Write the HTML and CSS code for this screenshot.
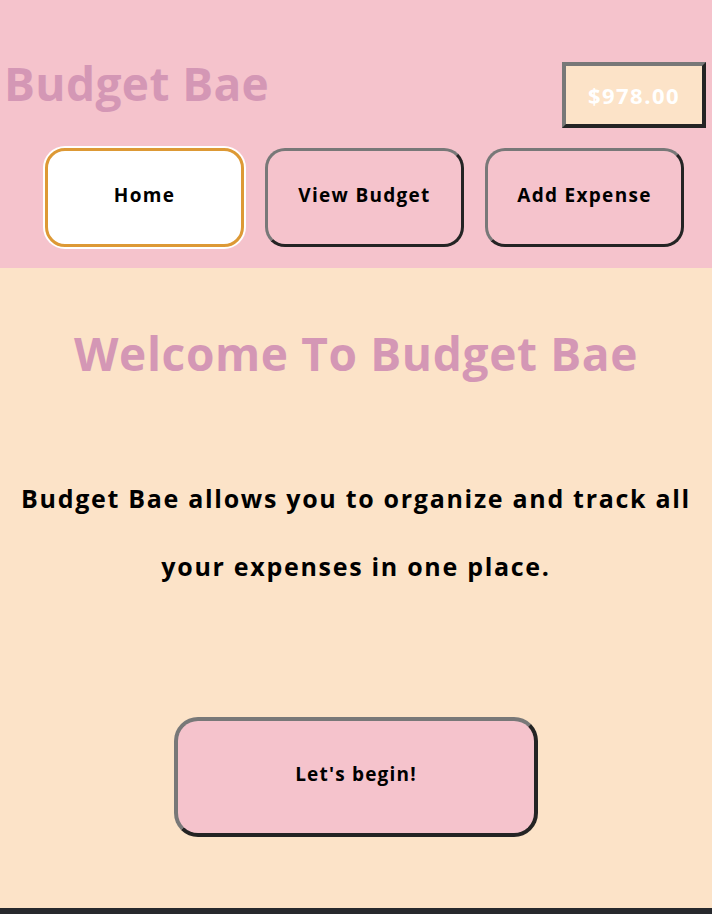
FILE: index.html
```html
<!DOCTYPE html>
<html>
<head>
<meta charset="utf-8">
<link rel="stylesheet" href="styles.css">
</head>
<body>
<header class="header">
  <div class="top">
    <h1 class="brand">Budget Bae</h1>
    <div class="balance">$978.00</div>
  </div>
  <nav class="nav">
    <button class="nav-btn active">Home</button>
    <button class="nav-btn">View Budget</button>
    <button class="nav-btn">Add Expense</button>
  </nav>
</header>
<main class="main">
  <h2 class="welcome">Welcome To Budget Bae</h2>
  <p class="intro">Budget Bae allows you to organize and track all your expenses in one place.</p>
  <button class="begin">Let's begin!</button>
</main>
<div class="footer-bar"></div>
</body>
</html>
```
FILE: styles.css
```css
* { box-sizing: border-box; }
html, body { margin: 0; padding: 0; }
body {
  font-family: "Open Sans", "DejaVu Sans", sans-serif;
  background: #fce3c8;
  height: 914px;
  display: flex;
  flex-direction: column;
}
.header {
  background: #f5c3cc;
  height: 268px;
  display: flex;
  flex-direction: column;
}
.top {
  display: flex;
  justify-content: space-between;
  align-items: flex-start;
  padding: 62px 6px 0 4px;
  height: 148px;
}
.brand {
  margin: 0;
  margin-top: -5px;
  font-size: 46px;
  font-weight: 700;
  letter-spacing: 0.4px;
  color: #d497b5;
  line-height: 52px;
}
.balance {
  width: 144px;
  height: 66px;
  background: #fce3c8;
  border: 4px solid;
  border-color: #787878 #242424 #242424 #787878;
  color: #fff;
  font-weight: 700;
  font-size: 22px;
  letter-spacing: 1.5px;
  display: flex;
  align-items: center;
  justify-content: center;
}
.nav {
  display: flex;
  gap: 21px;
  padding-left: 45px;
}
.nav-btn {
  width: 199px;
  height: 99px;
  border-radius: 20px;
  background: #f5c3cc;
  border: 3px solid;
  border-color: #787878 #242424 #242424 #787878;
  font-family: inherit;
  font-size: 19px;
  font-weight: 700;
  letter-spacing: 1.3px;
  color: #000;
  padding: 0 0 6px;
}
.nav-btn.active {
  background: #fff;
  border-color: #dd9935;
  box-shadow: 0 0 0 2px #fff;
}
.main {
  flex: 1;
  display: flex;
  flex-direction: column;
  align-items: center;
}
.welcome {
  margin: 50px 0 0;
  font-size: 46px;
  font-weight: 700;
  letter-spacing: 0.65px;
  color: #d497b5;
  line-height: 70px;
}
.intro {
  margin: 76px 0 0;
  padding: 0 14px;
  text-align: center;
  font-size: 25px;
  font-weight: 700;
  letter-spacing: 1.7px;
  line-height: 68px;
  color: #000;
}
.begin {
  margin-top: 117px;
  width: 364px;
  height: 120px;
  border-radius: 24px;
  background: #f5c3cc;
  border: 4px solid;
  border-color: #787878 #242424 #242424 #787878;
  font-family: inherit;
  font-size: 19px;
  font-weight: 700;
  letter-spacing: 1.2px;
  color: #000;
  padding: 0 0 6px;
}
.footer-bar {
  height: 6px;
  background: #27292d;
  margin-top: auto;
}
```
